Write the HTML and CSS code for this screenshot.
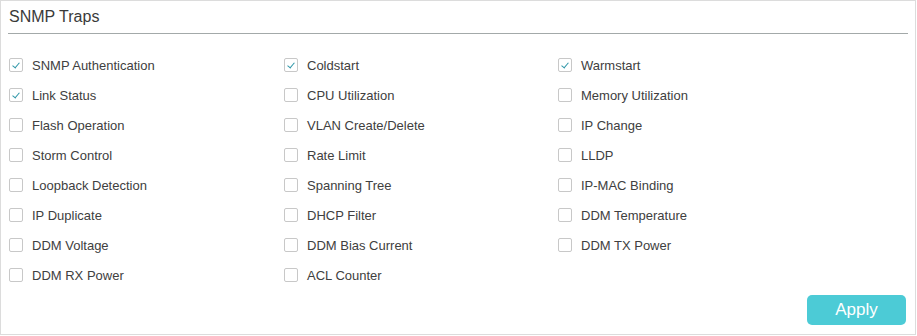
FILE: index.html
```html
<!DOCTYPE html>
<html>
<head>
<meta charset="utf-8">
<link rel="stylesheet" href="styles.css">
</head>
<body>
<div class="panel">
  <div class="title">SNMP Traps</div>
  <div class="grid">
    <label class="item"><span class="box on"></span>SNMP Authentication</label>
    <label class="item"><span class="box on"></span>Coldstart</label>
    <label class="item"><span class="box on"></span>Warmstart</label>
    <label class="item"><span class="box on"></span>Link Status</label>
    <label class="item"><span class="box"></span>CPU Utilization</label>
    <label class="item"><span class="box"></span>Memory Utilization</label>
    <label class="item"><span class="box"></span>Flash Operation</label>
    <label class="item"><span class="box"></span>VLAN Create/Delete</label>
    <label class="item"><span class="box"></span>IP Change</label>
    <label class="item"><span class="box"></span>Storm Control</label>
    <label class="item"><span class="box"></span>Rate Limit</label>
    <label class="item"><span class="box"></span>LLDP</label>
    <label class="item"><span class="box"></span>Loopback Detection</label>
    <label class="item"><span class="box"></span>Spanning Tree</label>
    <label class="item"><span class="box"></span>IP-MAC Binding</label>
    <label class="item"><span class="box"></span>IP Duplicate</label>
    <label class="item"><span class="box"></span>DHCP Filter</label>
    <label class="item"><span class="box"></span>DDM Temperature</label>
    <label class="item"><span class="box"></span>DDM Voltage</label>
    <label class="item"><span class="box"></span>DDM Bias Current</label>
    <label class="item"><span class="box"></span>DDM TX Power</label>
    <label class="item"><span class="box"></span>DDM RX Power</label>
    <label class="item"><span class="box"></span>ACL Counter</label>
  </div>
  <div class="actions"><button class="apply">Apply</button></div>
</div>
</body>
</html>
```
FILE: styles.css
```css
html, body { margin: 0; padding: 0; background: #fff; }
body { font-family: "Liberation Sans", Arial, sans-serif; color: #333; }
.panel {
  width: 914px;
  height: 333px;
  border: 1px solid #dcdcdc;
  position: relative;
}
.title {
  margin: 0 7px 0 7px;
  padding: 6px 0 0 1px;
  font-size: 16px;
  color: #3a3a3a;
  border-bottom: 1px solid #a3a9a9;
  box-sizing: border-box;
  height: 33px;
  line-height: 20px;
}
.grid {
  display: grid;
  grid-template-columns: 275px 274px 1fr;
  grid-auto-rows: 30px;
  margin: 16px 0 0 8px;
}
.item {
  display: flex;
  align-items: center;
  font-size: 13px;
  color: #404040;
}
.box {
  width: 14px;
  height: 14px;
  border: 1px solid #c8c8c8;
  border-radius: 2px;
  box-sizing: border-box;
  margin-right: 9px;
  position: relative;
  flex: none;
}
.box.on::after {
  content: "";
  position: absolute;
  left: 4px;
  top: 1.5px;
  width: 3px;
  height: 6px;
  border-right: 1px solid #2f97a8;
  border-bottom: 1px solid #2f97a8;
  transform: rotate(40deg);
}
.actions {
  display: flex;
  justify-content: flex-end;
  padding-right: 9px;
  margin-top: 5px;
}
.apply {
  width: 99px;
  height: 30px;
  border: none;
  border-radius: 5px;
  background: #4ccbd6;
  color: #fff;
  font-family: "Liberation Sans", Arial, sans-serif;
  font-size: 17px;
  padding: 0;
}
```
